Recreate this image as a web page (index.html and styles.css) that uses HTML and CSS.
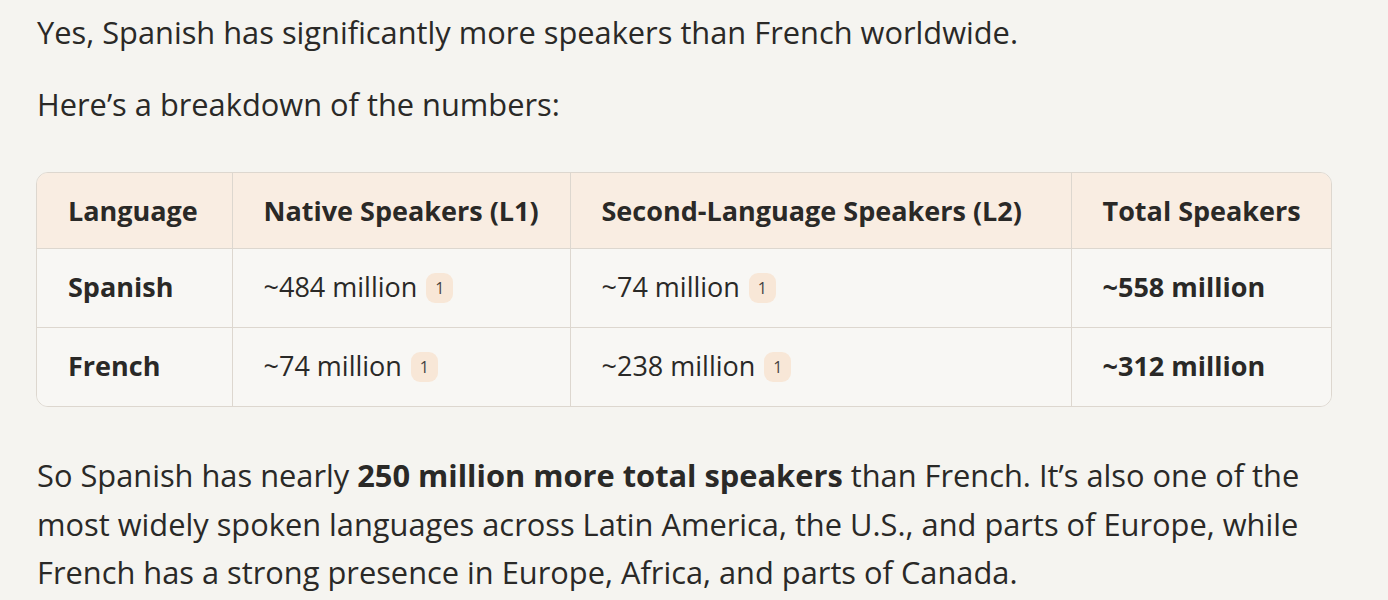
FILE: index.html
```html
<!DOCTYPE html>
<html>
<head>
<meta charset="utf-8">
<link rel="stylesheet" href="styles.css">
</head>
<body>
<div class="content">
  <p class="para">Yes, Spanish has significantly more speakers than French worldwide.</p>
  <p class="para">Here’s a breakdown of the numbers:</p>
  <div class="table-wrap">
    <table class="data">
      <colgroup>
        <col class="c1"><col class="c2"><col class="c3"><col class="c4">
      </colgroup>
      <thead>
        <tr><th>Language</th><th>Native Speakers (L1)</th><th>Second-Language Speakers (L2)</th><th>Total Speakers</th></tr>
      </thead>
      <tbody>
        <tr><td class="strong">Spanish</td><td>~484 million <span class="cite">1</span></td><td>~74 million <span class="cite">1</span></td><td class="strong">~558 million</td></tr>
        <tr><td class="strong">French</td><td>~74 million <span class="cite">1</span></td><td>~238 million <span class="cite">1</span></td><td class="strong">~312 million</td></tr>
      </tbody>
    </table>
  </div>
  <p class="para lead">So Spanish has nearly <strong>250 million more total speakers</strong> than French. It’s also one of the most widely spoken languages across Latin America, the U.S., and parts of Europe, while French has a strong presence in Europe, Africa, and parts of Canada.</p>
</div>
</body>
</html>
```
FILE: styles.css
```css
html, body { margin: 0; padding: 0; }
body {
  background: #f5f4f0;
  color: #2a2927;
  font-family: "Open Sans", "Lato", sans-serif;
}
.content {
  padding: 8px 36px 0 37px;
  width: 1295px;
}
.para {
  margin: 0 0 23px 0;
  font-size: 30.8px;
  line-height: 48.5px;
}
.para strong { font-weight: 700; }
.table-wrap {
  margin: 44px 0 44px -1px;
  border: 1px solid #ddd7cf;
  border-radius: 12px;
  overflow: hidden;
  width: 1294px;
}
.data {
  width: 100%;
  border-collapse: collapse;
  table-layout: fixed;
}
.c1 { width: 195px; }
.c2 { width: 338px; }
.c3 { width: 501px; }
.c4 { width: auto; }
.data th, .data td {
  text-align: left;
  padding: 0 0 0 31px;
  border-left: 1px solid #ddd7cf;
  border-top: 1px solid #ddd7cf;
  white-space: nowrap;
}
.data th:first-child, .data td:first-child { border-left: none; }
.data thead th {
  border-top: none;
  background: #f9ede2;
  height: 75px;
  font-size: 27px;
  font-weight: 700;
}
.data tbody td {
  background: #f8f7f4;
  height: 75px;
  padding-bottom: 3px;
  font-size: 27px;
}
.data td.strong { font-weight: 700; }
.cite {
  display: inline-block;
  vertical-align: 3px;
  min-width: 27px;
  height: 30px;
  line-height: 30px;
  border-radius: 9px;
  background: #f8e7d7;
  color: #444240;
  font-size: 16px;
  text-align: center;
  margin-left: 2px;
}
```
